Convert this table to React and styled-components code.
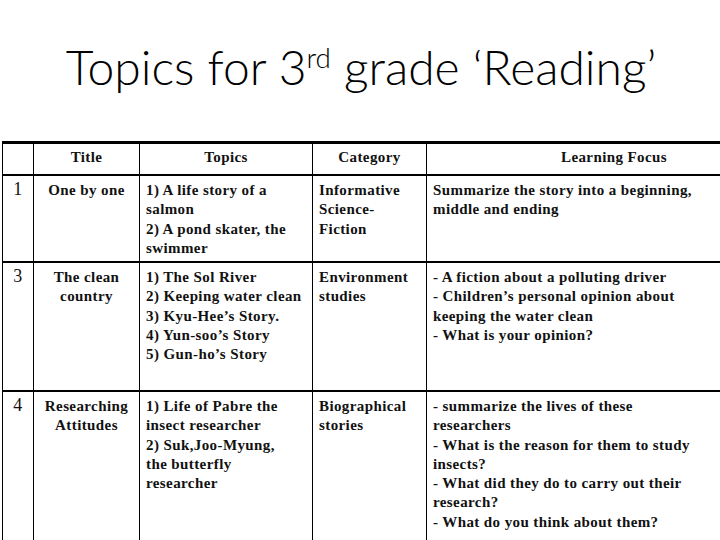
import React from "react";
import styled, { createGlobalStyle } from "styled-components";

const Global = createGlobalStyle`
  html, body { margin: 0; padding: 0; background: #fff; }
  body { width: 720px; height: 540px; overflow: hidden; }
`;

const Page = styled.div`
  width: 720px;
  height: 540px;
  overflow: hidden;
  display: flex;
  flex-direction: column;
`;

const TitleBar = styled.div`
  height: 142px;
  display: flex;
  align-items: flex-start;
  justify-content: center;
  padding-top: 37px;
  padding-left: 2px;
  box-sizing: border-box;
`;

const Heading = styled.h1`
  margin: 0;
  font-family: Lato, "Open Sans", sans-serif;
  font-weight: 300;
  font-size: 48px;
  line-height: 60px;
  color: #000;
  sup {
    font-size: 0.58em;
    vertical-align: 0.62em;
    line-height: 0;
  }
`;

const TableWrap = styled.div`
  overflow: hidden;
  padding-left: 2px;
`;

const Table = styled.table`
  border-collapse: collapse;
  table-layout: fixed;
  width: 800px;
  font-family: "Liberation Serif", "Times New Roman", serif;
  font-size: 15px;
  font-weight: 700;
  letter-spacing: 0.4px;
  color: #111;
  line-height: 19.3px;
`;

const Row = styled.tr`
  height: ${(p) => p.$h}px;
`;

const Cell = styled.td`
  border-left: 1px solid #000;
  border-right: 1px solid #000;
  border-top: ${(p) => (p.$top ? 3 : 2)}px solid #000;
  border-bottom: 2px solid #000;
  vertical-align: ${(p) => (p.$head ? "middle" : "top")};
  text-align: ${(p) => (p.$center ? "center" : "left")};
  padding: ${(p) => (p.$head ? "0 6px 4px 6px" : "5px 6px 0 6px")};
  white-space: nowrap;
`;

const Num = styled(Cell)`
  font-size: 18px;
  font-weight: 400;
  padding-top: 4px;
`;

const lines = (arr) =>
  arr.map((l, i) => (
    <React.Fragment key={i}>
      {l}
      {i < arr.length - 1 && <br />}
    </React.Fragment>
  ));

const rows = [
  {
    n: "1",
    h: 87,
    title: ["One by one"],
    topics: ["1)  A life story of a", "salmon", "2) A pond skater, the", "swimmer"],
    cat: ["Informative", "Science-", "Fiction"],
    focus: ["Summarize the story into a beginning,", "middle and ending"],
  },
  {
    n: "3",
    h: 129,
    title: ["The clean", "country"],
    topics: [
      "1) The Sol River",
      "2) Keeping water clean",
      "3) Kyu-Hee\u2019s Story.",
      "4) Yun-soo\u2019s Story",
      "5) Gun-ho\u2019s Story",
    ],
    cat: ["Environment", "studies"],
    focus: [
      "- A fiction about a polluting driver",
      "- Children\u2019s personal opinion about",
      "keeping the water clean",
      "- What is your opinion?",
    ],
  },
  {
    n: "4",
    h: 150,
    title: ["Researching", "Attitudes"],
    topics: [
      "1) Life of Pabre the",
      "insect researcher",
      "2) Suk,Joo-Myung,",
      "the butterfly",
      "researcher",
    ],
    cat: ["Biographical", "stories"],
    focus: [
      "- summarize the lives of these",
      "researchers",
      "- What is the reason for them to study",
      "insects?",
      "- What did they do to carry out their",
      "research?",
      "- What do you think about them?",
    ],
  },
];

export default function App() {
  return (
    <>
      <Global />
      <Page>
        <TitleBar>
          <Heading>
            Topics for 3<sup>rd</sup> grade {"\u2018"}Reading{"\u2019"}
          </Heading>
        </TitleBar>
        <TableWrap>
          <Table>
            <colgroup>
              <col style={{ width: 31 }} />
              <col style={{ width: 106 }} />
              <col style={{ width: 173 }} />
              <col style={{ width: 114 }} />
              <col />
            </colgroup>
            <tbody>
              <Row $h={32}>
                <Cell $head $top />
                <Cell $head $top $center>Title</Cell>
                <Cell $head $top $center>Topics</Cell>
                <Cell $head $top $center>Category</Cell>
                <Cell $head $top $center>Learning Focus</Cell>
              </Row>
              {rows.map((r) => (
                <Row key={r.n} $h={r.h}>
                  <Num $center>{r.n}</Num>
                  <Cell $center>{lines(r.title)}</Cell>
                  <Cell>{lines(r.topics)}</Cell>
                  <Cell>{lines(r.cat)}</Cell>
                  <Cell>{lines(r.focus)}</Cell>
                </Row>
              ))}
            </tbody>
          </Table>
        </TableWrap>
      </Page>
    </>
  );
}
